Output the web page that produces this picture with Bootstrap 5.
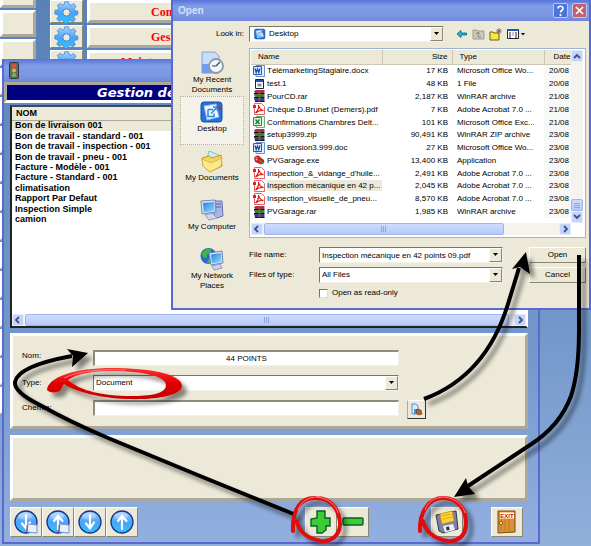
<!DOCTYPE html>
<html lang="fr">
<head>
<meta charset="utf-8">
<meta name="viewport" content="width=device-width, initial-scale=1">
<title>Gestion de</title>
<link rel="stylesheet" href="https://cdn.jsdelivr.net/npm/bootstrap@5.3.0/dist/css/bootstrap.min.css">
<style>
:root{--face:#ece9d8;--edge:#aca899;--frame:#5b68d0;--ui:"Liberation Sans",sans-serif}
body{font:8px/12px var(--ui);color:#000;background:#6d93c8;overflow:hidden}
button,input,select{font:inherit;color:inherit;margin:0;padding:0;border-radius:0}
svg{display:block;flex:none}
.desk{min-height:100vh;background:linear-gradient(#5981b8,#7298ca 60%,#92afdb)}
.bevel{background:var(--face);border:3px solid;border-color:#fff var(--edge) var(--edge) #fff}
.raised{background:var(--face);border:1px solid;border-color:#fff #8a8674 #8a8674 #fff}
/* menu behind the windows */
.side-menu{width:36px;gap:2px}
.side-menu .bevel{height:27px}
.side-menu .bevel:first-child{height:8px;border-top:0}
.menu-list{padding-left:14px}
.menu-line{height:25px;gap:4px;padding-bottom:2px}
.menu-line .gear{width:33px}
.menu-line .entry{color:#f00;font:bold 12px/16px "Liberation Serif",serif;text-align:left;padding-left:61px;white-space:nowrap}
.menu-line .entry.wide{padding-left:31px}
/* windows */
.win{position:absolute;border:2px solid var(--frame);background:var(--face)}
.gestion{left:2px;top:59px;right:51px;border-top:0;background:linear-gradient(#6088bd,#7397cb 60%,#92afdf)}
.open-dlg{left:171px;top:0;right:0;height:310px;border-top:0;z-index:2}
.bar{background:linear-gradient(#5874d8,#7f9de8 30%,#7b98e2 70%,#6f86d8)}
.gestion .bar{height:23px;padding-left:5px;border-radius:5px 0 0 0}
.open-dlg .bar{height:21px;padding:0 2px 0 5px;color:#d6e0fb;font:bold 10px/21px "Liberation Sans",sans-serif}
.sq{width:15px;height:15px;border:1px solid #b9c8f5;border-radius:2px;background:#4a74e0}
.sq.close-x{background:#c3606f}
.banner{margin:0;border:3px solid;border-color:var(--edge) #fff #fff var(--edge);background:#000080;color:#fff;font:italic bold 13px/15px "DejaVu Sans",sans-serif;padding-left:90px;white-space:nowrap}
.content{padding:2px 10px 5px 6px}
.names{height:223px;background:#fff;border:2px solid;border-color:#3b4a5c #fff #222 #222}
.names table{width:100%;height:118px;font:bold 9px/9px "Liberation Sans",sans-serif}
.names th{height:13px;background:var(--face);border-bottom:1px solid var(--edge);padding:0 0 0 4px}
.names td{padding:0 0 0 3px}
.names tr.on td{background:var(--face)}
.hbar{height:12px;gap:1px;background:#f4f3ee}
.knob{width:12px;border:1px solid #e4ebff;border-radius:2px;background:#c6d4fb;color:#3b5289}
.thumb{border:1px solid #9fb5f0;border-radius:2px;background:linear-gradient(#cfdcff,#b6c9f8)}
.form-panel{margin-top:5px;padding:14px 9px 7px 9px}
.form-grid{display:grid;grid-template-columns:71px minmax(0,1fr) 28px;row-gap:9px;padding-right:89px}
.form-grid > *{height:16px}
.sunk{background:#fff;border:1px solid;border-color:#8f8c7d #f4f2e8 #f4f2e8 #8f8c7d;border-width:2px 1px 1px 2px;min-width:0;width:100%}
.pick{width:19px;height:19px;border-color:#fff #333 #333 #aaa;margin-left:8px}
.combo{display:grid;grid-template-columns:minmax(0,1fr) 13px;background:#fff;border:1px solid;border-color:#77746a #f4f2e8 #f4f2e8 #77746a;min-width:0}
.combo select,.combo input{grid-area:1/1/2/3;border:0;background:transparent;appearance:none;padding-left:2px;width:100%;height:100%;outline:0}
.combo .drop{grid-area:1/2;pointer-events:none}
.info-panel{margin-top:6px;height:66px}
.tools{margin-top:6px;height:30px;padding-right:5px}
.tools .raised{width:32px;height:30px}
.tools .edit{margin-left:auto;margin-right:62px}
.tools .finish{gap:28px}
/* open dialog */
.dlg-grid{display:grid;grid-template-columns:64px minmax(0,1fr);column-gap:5px;padding:5px 3px 0 7px}
.look{display:grid;grid-template-columns:minmax(0,195px) auto;column-gap:12px;height:16px}
.look .combo{grid-template-columns:18px minmax(0,1fr) 13px}
.look .combo select{grid-area:1/1/2/4;padding-left:19px}
.look .combo .drop{grid-area:1/3}
.look .combo svg.lead-ico{grid-area:1/1}
.caption{line-height:16px}
.flat{border:0;background:none}
.place{height:49px;padding-top:3px;border:1px solid transparent;background:none;line-height:10px}
.place.on{background:#f4f2e8;border:1px dotted #b5b19e}
.places{padding-top:5px}
.view{margin-top:6px;height:190px;background:#fff;border:1px solid #9db3d8;padding:1px 2px 1px 1px;display:grid;grid-template-columns:minmax(0,1fr) 12px;grid-template-rows:minmax(0,1fr) 13px}
.files{overflow:hidden}
.files table{table-layout:fixed;width:100%;height:168px;white-space:nowrap}
.files th{height:14px;background:var(--face);font-weight:400;border-right:1px solid #cbc7b4;padding:0 7px;line-height:13px;border-bottom:1px solid #cbc7b4}
.files td{padding:0;line-height:11px}
.files td:nth-child(2),.files th:nth-child(2){text-align:right;padding-right:4px}
.files td:nth-child(3){padding-left:5px}
.files td:last-child{background:#f8f8f6;padding-left:5px}
.files th:last-child{border-right:0;padding:0 0 0 9px}
.files .on span{background:var(--face)}
.fn{padding-left:2px;gap:2px}
.vbar{background:#f4f3ee}
.vbar .knob{height:12px}
.fields{display:grid;grid-template-columns:70px minmax(0,184px) minmax(0,1fr);row-gap:4px;margin-top:9px}
.fields > *{height:16px}
.fields .act{width:57px;justify-self:end}
.fields .tick{height:12px}
.tick input{appearance:none;width:9px;height:9px;background:#fff;border:1px solid;border-color:#77746a #ddd #ddd #77746a}
.notes{position:absolute;left:0;top:0;z-index:3;pointer-events:none}
</style>
<script src="https://cdn.jsdelivr.net/npm/bootstrap@5.3.0/dist/js/bootstrap.bundle.min.js"></script>
</head>
<body>
<svg width="0" height="0" class="position-absolute" aria-hidden="true">
<defs>
<linearGradient id="blue" x1="0" y1="0" x2="0" y2="1"><stop offset="0" stop-color="#a9d4ff"/><stop offset=".5" stop-color="#4ba3f5"/><stop offset="1" stop-color="#2fc4ff"/></linearGradient>
<linearGradient id="scr" x1="0" y1="0" x2="1" y2="1"><stop offset="0" stop-color="#2a7de0"/><stop offset="1" stop-color="#8be4fb"/></linearGradient>
<linearGradient id="red" x1="0" y1="0" x2="0" y2="1"><stop offset="0" stop-color="#f33"/><stop offset=".5" stop-color="#e00000"/><stop offset="1" stop-color="#c40000"/></linearGradient>
<symbol id="gear" viewBox="0 0 24 24"><path d="M10 1l4-.5.7 3.2 2.2 1 2.8-2 2.7 3-1.8 2.6.8 2.2 3.1.8-.3 3.8-3.2.4-1 2 1.700 2.700-2.900 2.600-2.600-1.700-2.100.8-.8 3.100-4-.2-.5-3.200-2.100-.9-2.700 1.700-2.700-2.900 1.800-2.500-.8-2.200-3.100-.7.300-4 3.200-.4.9-2-1.700-2.700L5.100 2.600 7.700 4.300l1.800-.6z" fill="url(#blue)" stroke="#3a7fd0" stroke-width=".8"/><circle cx="12" cy="12.500" r="4" fill="#ece9d8" stroke="#3a7fd0"/></symbol>
<symbol id="caret" viewBox="0 0 7 4"><path d="M1 0h5L3.500 3z"/></symbol>
<symbol id="word" viewBox="0 0 12 12"><path d="M3 .5h8.500v11H3z" fill="#e6efff" stroke="#6d8fc9"/><path d="M.5 1.500h8v8h-8z" fill="#dbe7fb" stroke="#2b5cb0"/><path d="M2 3.500l1.200 4L4.500 4l1.300 3.500L7 3.500" fill="none" stroke="#1c48a8" stroke-width="1.200"/></symbol>
<symbol id="xls" viewBox="0 0 12 12"><path d="M3 .5h8.500v11H3z" fill="#eaf6ea" stroke="#6fae7a"/><path d="M.5 1.500h8v8h-8z" fill="#e0f2e0" stroke="#2f8a3a"/><path d="M2.500 3.500l4 4.500M6.500 3.500l-4 4.500" stroke="#1d7d2c" stroke-width="1.400"/></symbol>
<symbol id="app" viewBox="0 0 12 12"><path d="M2.500 1.500h8v9h-8z" fill="#fff" stroke="#222"/><path d="M3 2h7v2H3z" fill="#274db0"/><path d="M4.500 5.500h4v3h-4z" fill="#7d91a8"/></symbol>
<symbol id="rar" viewBox="0 0 12 12"><path d="M1 1l2-1h8.500v3H2z" fill="#b5265c"/><path d="M1 4h10.500v3H2z" fill="#2a8a35"/><path d="M1 8h10.500v3.500H2z" fill="#3a3aa0"/><path d="M1 3.500h10.500M1 7.500h10.500M2 11.500h9.500" stroke="#111"/><path d="M5.500 0h2v11.500h-2z" fill="#8a5a20"/></symbol>
<symbol id="pdf" viewBox="0 0 12 12"><path d="M1.500 .5h7l3 3v8h-10z" fill="#fff" stroke="#d66"/><path d="M2.500 10c2-2 3.500-5.500 3-8 .5 3 2.500 5 5 5.500-3-.5-5.500.5-8 2.500z" fill="none" stroke="#e01818" stroke-width="1.300"/><path d="M0 2h3v3H0z" fill="#d22"/></symbol>
<symbol id="exe" viewBox="0 0 12 12"><path d="M1 4c2-3 5-3 6-1l4 3c1 3-1 5-4 4L2 8z" fill="#c81e28"/><path d="M2 3l3 1M6 6l4 3" stroke="#2d2" stroke-width="1"/><circle cx="3.500" cy="5.500" r="1" fill="#fbb"/></symbol>
<symbol id="desktop" viewBox="0 0 24 24"><rect x="1" y="2" width="21" height="20" rx="3" fill="#2671d9" stroke="#1550a8"/><path d="M4 6l12-2 3 13-12 3z" fill="#eef6ff" stroke="#8ab4ea"/><path d="M8 9.500h5M8 9.500v7h6v-3M11 13.500l6-6M13 7h4.500v4" fill="none" stroke="#2a86d8" stroke-width="1.500"/><path d="M18 6l4 2-3 2z" fill="#a03a20"/></symbol>
<symbol id="recent" viewBox="0 0 24 24"><path d="M2 1h13l4 4v17H2z" fill="#c9ddfb" stroke="#7fa4e0"/><path d="M2 13h10v9H2z" fill="#6f9ced"/><circle cx="16" cy="15" r="7" fill="#f2f7fc" stroke="#8e9aa8" stroke-width="1.800"/><path d="M16 15l4-4M16 15h-4" stroke="#345" stroke-width="1.200"/></symbol>
<symbol id="docs" viewBox="0 0 24 24"><path d="M9 2l10 4-4 12-9-4z" fill="#cfe6fc" stroke="#7cb"/><path d="M2 9l7-2 3 2 9-3 1 11-12 6-7-6z" fill="#f5d65c" stroke="#c59a20"/><path d="M2 10l9 4 11-5-1 8-11 6-7-6z" fill="#fce98e" stroke="#d3aa30" stroke-width=".7"/></symbol>
<symbol id="computer" viewBox="0 0 24 24"><path d="M14 3h8l1 15-6 2-3-2z" fill="#a9b5df" stroke="#6877b3"/><path d="M16 6h5M16 9h5" stroke="#5363a5"/><path d="M1 3l14-1 1 12-14 2z" fill="#dbe3f5" stroke="#7484b8"/><path d="M3 5l11-1 .7 9-11 1.300z" fill="url(#scr)"/><path d="M5 17l7-2 5 5-8 2z" fill="#cdd5ee" stroke="#8c98c7"/></symbol>
<symbol id="network" viewBox="0 0 24 24"><circle cx="8.500" cy="9" r="8" fill="#2469cf"/><path d="M2 6c3-5 8-5 9-3 0 4-4 3-4 6s-3 3-5-1zM8 12l4 1-2 4-3-1z" fill="#3fb545"/><path d="M9 6l13-2 1 12-12 2z" fill="#dbe3f5" stroke="#7484b8"/><path d="M11 7.500l10-1.500.7 9-9.700 1.200z" fill="url(#scr)"/><path d="M12 19l8-2 2 4-8 2z" fill="#cdd5ee" stroke="#8c98c7"/></symbol>
<symbol id="ball" viewBox="0 0 24 24"><ellipse cx="12" cy="12" rx="11" ry="11" fill="url(#blue)" stroke="#17358f" stroke-width="1.300"/><ellipse cx="11" cy="6" rx="7" ry="3.500" fill="#fff" opacity=".3"/></symbol>
<symbol id="down" viewBox="0 0 24 24"><path d="M12 5v13M8 13.500l4 5 4-6" fill="none" stroke="#fff" stroke-width="2.200" stroke-linecap="round"/></symbol>
<symbol id="up" viewBox="0 0 24 24"><path d="M12 19V7M8 11l4-5 4.500 5" fill="none" stroke="#fff" stroke-width="2.200" stroke-linecap="round"/></symbol>
<symbol id="page" viewBox="0 0 24 24"><path d="M14 14l9 1v8l-10-1z" fill="#e4f2ff" stroke="#7593c4"/><path d="M13 15v7" stroke="#b33"/></symbol>
</defs>
</svg>

<main class="desk position-relative overflow-hidden">
  <div class="d-flex">
    <div class="side-menu d-flex flex-column flex-shrink-0">
      <div class="bevel"></div><div class="bevel"></div><div class="bevel"></div><div class="bevel"></div><div class="bevel"></div><div class="bevel"></div><div class="bevel"></div><div class="bevel"></div><div class="bevel"></div><div class="bevel"></div><div class="bevel"></div><div class="bevel"></div><div class="bevel"></div><div class="bevel"></div><div class="bevel"></div>
    </div>
    <div class="menu-list flex-grow-1">
      <div class="menu-line d-flex"><button class="raised gear d-flex justify-content-center align-items-center" aria-label="Options"><svg width="25" height="22"><use href="#gear"/></svg></button><button class="bevel entry flex-grow-1">Con</button></div>
      <div class="menu-line d-flex"><button class="raised gear d-flex justify-content-center align-items-center" aria-label="Options"><svg width="25" height="22"><use href="#gear"/></svg></button><button class="bevel entry flex-grow-1">Ges</button></div>
      <div class="menu-line d-flex"><button class="raised gear d-flex justify-content-center align-items-center" aria-label="Options"><svg width="25" height="22"><use href="#gear"/></svg></button><button class="bevel entry wide flex-grow-1">Mainte</button></div>
    </div>
  </div>

  <section class="win gestion" aria-label="Gestion">
    <div class="bar d-flex align-items-center">
      <svg width="10" height="17" viewBox="0 0 10 17"><rect x=".5" y=".5" width="9" height="16" rx="1" fill="#666a60" stroke="#333"/><circle cx="5" cy="4" r="2" fill="#f04a30"/><circle cx="5" cy="8.500" r="2" fill="#f0b040"/><circle cx="5" cy="13" r="2" fill="#50c860"/></svg>
    </div>
    <h1 class="banner">Gestion de</h1>
    <div class="content">
      <div class="names d-flex flex-column justify-content-between">
        <table>
          <thead><tr><th scope="col">NOM</th></tr></thead>
          <tbody>
            <tr class="on"><td>Bon de livraison 001</td></tr>
            <tr><td>Bon de travail - standard - 001</td></tr>
            <tr><td>Bon de travail - inspection - 001</td></tr>
            <tr><td>Bon de travail - pneu - 001</td></tr>
            <tr><td>Facture - Modèle - 001</td></tr>
            <tr><td>Facture - Standard - 001</td></tr>
            <tr><td>climatisation</td></tr>
            <tr><td>Rapport Par Defaut</td></tr>
            <tr><td>Inspection Simple</td></tr>
            <tr><td>camion</td></tr>
          </tbody>
        </table>
        <div class="hbar d-flex">
          <button class="knob" aria-label="Gauche"><svg width="10" height="8" viewBox="0 0 10 8"><path d="M6 1L3 4l3 3" fill="none" stroke="#3b5289" stroke-width="1.800"/></svg></button>
          <div class="thumb flex-grow-1 d-flex justify-content-center align-items-center"><svg width="8" height="6"><path d="M1.500 0v6M3.500 0v6M5.500 0v6" stroke="#8ea5e2"/></svg></div>
          <button class="knob ms-1" aria-label="Droite"><svg width="10" height="8" viewBox="0 0 10 8"><path d="M4 1l3 3-3 3" fill="none" stroke="#3b5289" stroke-width="1.800"/></svg></button>
        </div>
      </div>

      <div class="bevel form-panel">
        <div class="form-grid">
          <label for="nom">Nom:</label><input id="nom" class="sunk text-center" value="44 POINTS"><span></span>
          <label for="type" class="caption">Type:</label>
          <div class="combo"><select id="type"><option>Document</option></select><span class="drop raised d-flex justify-content-center align-items-center"><svg width="7" height="4"><use href="#caret"/></svg></span></div><span></span>
          <label for="chemin" class="caption">Chemin:</label><input id="chemin" class="sunk"><button class="raised pick d-flex justify-content-center align-items-center" aria-label="Parcourir"><svg width="13" height="13" viewBox="0 0 13 13"><path d="M2 1h4l2 2v8H2z" fill="#d8ecff" stroke="#5c8fc0"/><path d="M4 6h3v5H4z" fill="#3b9be0"/><path d="M7 6l4 1 1 4-3 1-3-2z" fill="#b5612a" stroke="#5c3015" stroke-width=".6"/></svg></button>
        </div>
      </div>
      <div class="bevel info-panel"></div>

      <div class="tools d-flex">
        <div class="d-flex">
          <button class="raised d-flex justify-content-center align-items-center" aria-label="Dernier"><svg width="24" height="24"><use href="#ball"/><use href="#down"/><use href="#page"/></svg></button>
          <button class="raised d-flex justify-content-center align-items-center" aria-label="Premier"><svg width="24" height="24"><use href="#ball"/><use href="#up"/><use href="#page"/></svg></button>
          <button class="raised d-flex justify-content-center align-items-center" aria-label="Suivant"><svg width="24" height="24"><use href="#ball"/><use href="#down"/></svg></button>
          <button class="raised d-flex justify-content-center align-items-center" aria-label="Précédent"><svg width="24" height="24"><use href="#ball"/><use href="#up"/></svg></button>
        </div>
        <div class="edit d-flex">
          <button class="raised d-flex justify-content-center align-items-center" aria-label="Ajouter"><svg width="22" height="24" viewBox="0 0 22 24"><path d="M7 1h8v7h5v8h-4v4l-4 3H7v-7H1V9l6-1z" fill="#3ccc36" stroke="#0b5d2c" stroke-width="1.400"/></svg></button>
          <button class="raised d-flex justify-content-center align-items-center" aria-label="Supprimer"><svg width="22" height="10" viewBox="0 0 22 10"><rect x="1" y="1" width="20" height="7" rx="1" fill="#3ccc36" stroke="#0b5d2c" stroke-width="1.400"/></svg></button>
        </div>
        <div class="finish d-flex">
          <button class="raised d-flex justify-content-center align-items-center" aria-label="Enregistrer"><svg width="24" height="24" viewBox="0 0 24 24"><path d="M1 5l5-1 2 8 10-3-2-7 5-1 2 18-15 4-4-2z" fill="#7d81a4" stroke="#34364d"/><path d="M5 4l12-3 2 10-12 3z" fill="#ffd43a" stroke="#d39a10"/><path d="M7 6l9-2M8 9l9-2" stroke="#e0a820"/><path d="M8 16l10-2 2 6-10 2.500z" fill="#eef"/><path d="M11 17l3-.5.700 3.500-3 .5z" fill="#334"/></svg></button>
          <button class="raised d-flex justify-content-center align-items-center" aria-label="Quitter"><svg width="20" height="24" viewBox="0 0 20 24"><path d="M1 1h17v21l-17 1z" fill="#d99332" stroke="#7a4810"/><path d="M4 9v12M8 9v12M12 9v12" stroke="#c07a20"/><path d="M3 2.500h14v6H3z" fill="#fff"/><text x="10" y="8" font-family="Liberation Sans" font-weight="bold" font-size="6" text-anchor="middle" fill="#e00">EXIT</text><circle cx="4" cy="13" r="1.700" fill="#ffd860" stroke="#6a3c08" stroke-width=".7"/></svg></button>
        </div>
      </div>
    </div>
  </section>

  <section class="win open-dlg" aria-label="Open">
    <div class="bar d-flex align-items-center">
      <span class="flex-grow-1">Open</span>
      <button class="sq me-1 d-flex justify-content-center align-items-center" aria-label="Help"><svg width="9" height="11" viewBox="0 0 9 11"><path d="M2 3.500C2 .5 7 .5 7 3.500 7 5.500 4.500 5.500 4.500 7.500M4.500 9v2" fill="none" stroke="#fff" stroke-width="1.700"/></svg></button>
      <button class="sq close-x d-flex justify-content-center align-items-center" aria-label="Close"><svg width="9" height="9" viewBox="0 0 9 9"><path d="M1 1l7 7M8 1L1 8" stroke="#fff" stroke-width="1.700"/></svg></button>
    </div>
    <div class="dlg-grid">
      <label for="look" class="text-end caption">Look in:</label>
      <div class="look">
        <div class="combo"><svg class="lead-ico align-self-center ms-1" width="12" height="12"><use href="#desktop"/></svg><select id="look"><option>Desktop</option></select><span class="drop raised d-flex justify-content-center align-items-center"><svg width="7" height="4"><use href="#caret"/></svg></span></div>
        <div class="d-flex align-items-center gap-1">
          <button class="flat" aria-label="Back"><svg width="12" height="12" viewBox="0 0 12 12"><path d="M1 6l4-3.500V5h5.500v2H5v2.500z" fill="#1bc4dc" stroke="#0a5a78" stroke-width=".8"/></svg></button>
          <button class="flat" aria-label="Up"><svg width="13" height="12" viewBox="0 0 13 12"><path d="M1 2h4l1 1h6v8H1z" fill="#cbc8bb" stroke="#a09d90"/><path d="M4 6l2-2 2 2M6 4v5h3" fill="none" stroke="#8d8a7e"/></svg></button>
          <button class="flat" aria-label="New folder"><svg width="13" height="13" viewBox="0 0 13 13"><path d="M1 4h3l1 1h5v7H1z" fill="#ffe640" stroke="#6b6210"/><path d="M10 0v6M7 3h6M8 1l4 4M12 1L8 5" stroke="#555" stroke-width=".7"/></svg></button>
          <button class="flat d-flex align-items-center" aria-label="Views"><svg width="20" height="12" viewBox="0 0 20 12"><path d="M1.500 1.500h11v9h-11z" fill="#fff" stroke="#223"/><path d="M1 1h12v2H1z" fill="#2353b8"/><path d="M3 5h2M6.500 5h1M9 5h2M3 7h2M6.500 7h1M9 7h2M3 9h2M9 9h2" stroke="#223"/><path d="M15 5h4l-2 2.500z"/></svg></button>
        </div>
      </div>

      <nav class="places d-flex flex-column" aria-label="Places">
        <button class="place d-flex flex-column align-items-center"><svg width="24" height="24"><use href="#recent"/></svg><span>My Recent<br>Documents</span></button>
        <button class="place on d-flex flex-column align-items-center"><svg width="24" height="24"><use href="#desktop"/></svg><span>Desktop</span></button>
        <button class="place d-flex flex-column align-items-center"><svg width="24" height="24"><use href="#docs"/></svg><span>My Documents</span></button>
        <button class="place d-flex flex-column align-items-center"><svg width="24" height="24"><use href="#computer"/></svg><span>My Computer</span></button>
        <button class="place d-flex flex-column align-items-center"><svg width="24" height="24"><use href="#network"/></svg><span>My Network<br>Places</span></button>
      </nav>

      <div>
        <div class="view">
          <div class="files">
            <table>
              <colgroup><col><col width="70"><col width="92"><col width="27"></colgroup>
              <thead><tr><th scope="col">Name</th><th scope="col">Size</th><th scope="col">Type</th><th scope="col">Date</th></tr></thead>
              <tbody>
                <tr><td><div class="fn d-flex align-items-center"><svg width="12" height="12"><use href="#word"/></svg><span>TélémarketingStagiaire.docx</span></div></td><td>17 KB</td><td>Microsoft Office Wo...</td><td>20/08</td></tr>
                <tr><td><div class="fn d-flex align-items-center"><svg width="12" height="12"><use href="#app"/></svg><span>test.1</span></div></td><td>48 KB</td><td>1 File</td><td>20/08</td></tr>
                <tr><td><div class="fn d-flex align-items-center"><svg width="12" height="12"><use href="#rar"/></svg><span>PourCD.rar</span></div></td><td>2,187 KB</td><td>WinRAR archive</td><td>21/08</td></tr>
                <tr><td><div class="fn d-flex align-items-center"><svg width="12" height="12"><use href="#pdf"/></svg><span>Chèque D.Brunet (Demers).pdf</span></div></td><td>7 KB</td><td>Adobe Acrobat 7.0 ...</td><td>21/08</td></tr>
                <tr><td><div class="fn d-flex align-items-center"><svg width="12" height="12"><use href="#xls"/></svg><span>Confirmations Chambres Delt...</span></div></td><td>101 KB</td><td>Microsoft Office Exc...</td><td>21/08</td></tr>
                <tr><td><div class="fn d-flex align-items-center"><svg width="12" height="12"><use href="#rar"/></svg><span>setup3999.zip</span></div></td><td>90,491 KB</td><td>WinRAR ZIP archive</td><td>23/08</td></tr>
                <tr><td><div class="fn d-flex align-items-center"><svg width="12" height="12"><use href="#word"/></svg><span>BUG version3.999.doc</span></div></td><td>27 KB</td><td>Microsoft Office Wo...</td><td>23/08</td></tr>
                <tr><td><div class="fn d-flex align-items-center"><svg width="12" height="12"><use href="#exe"/></svg><span>PVGarage.exe</span></div></td><td>13,400 KB</td><td>Application</td><td>23/08</td></tr>
                <tr><td><div class="fn d-flex align-items-center"><svg width="12" height="12"><use href="#pdf"/></svg><span>Inspection_&amp;_vidange_d'huile...</span></div></td><td>2,491 KB</td><td>Adobe Acrobat 7.0 ...</td><td>23/08</td></tr>
                <tr class="on"><td><div class="fn d-flex align-items-center"><svg width="12" height="12"><use href="#pdf"/></svg><span class="flex-grow-1">Inspection mécanique en 42 p...</span></div></td><td>2,045 KB</td><td>Adobe Acrobat 7.0 ...</td><td>23/08</td></tr>
                <tr><td><div class="fn d-flex align-items-center"><svg width="12" height="12"><use href="#pdf"/></svg><span>Inspection_visuelle_de_pneu...</span></div></td><td>8,570 KB</td><td>Adobe Acrobat 7.0 ...</td><td>23/08</td></tr>
                <tr><td><div class="fn d-flex align-items-center"><svg width="12" height="12"><use href="#rar"/></svg><span>PVGarage.rar</span></div></td><td>1,985 KB</td><td>WinRAR archive</td><td>23/08</td></tr>
              </tbody>
            </table>
          </div>
          <div class="vbar d-flex flex-column">
            <button class="knob" aria-label="Scroll up"><svg width="10" height="8" viewBox="0 0 10 8"><path d="M2 6l3-3 3 3" fill="none" stroke="#3b5289" stroke-width="1.800"/></svg></button>
            <div class="flex-grow-1"></div>
            <div class="thumb knob d-flex justify-content-center align-items-center"><svg width="6" height="7"><path d="M0 1.500h6M0 3.500h6M0 5.500h6" stroke="#8ea5e2"/></svg></div>
            <button class="knob" aria-label="Scroll down"><svg width="10" height="8" viewBox="0 0 10 8"><path d="M2 2l3 3 3-3" fill="none" stroke="#3b5289" stroke-width="1.800"/></svg></button>
          </div>
          <div class="hbar d-flex">
            <button class="knob" aria-label="Scroll left"><svg width="10" height="8" viewBox="0 0 10 8"><path d="M6 1L3 4l3 3" fill="none" stroke="#3b5289" stroke-width="1.800"/></svg></button>
            <div class="thumb w-75 d-flex justify-content-center align-items-center"><svg width="8" height="6"><path d="M1.500 0v6M3.500 0v6M5.500 0v6" stroke="#8ea5e2"/></svg></div>
            <button class="knob ms-auto" aria-label="Scroll right"><svg width="10" height="8" viewBox="0 0 10 8"><path d="M4 1l3 3-3 3" fill="none" stroke="#3b5289" stroke-width="1.800"/></svg></button>
          </div>
        </div>
        <div class="fields">
          <label for="fname" class="caption">File name:</label>
          <div class="combo"><input id="fname" value="Inspection mécanique en 42 points 09.pdf"><span class="drop raised d-flex justify-content-center align-items-center"><svg width="7" height="4"><use href="#caret"/></svg></span></div>
          <button class="raised act">Open</button>
          <label for="ftype" class="caption">Files of type:</label>
          <div class="combo"><select id="ftype"><option>All Files</option></select><span class="drop raised d-flex justify-content-center align-items-center"><svg width="7" height="4"><use href="#caret"/></svg></span></div>
          <button class="raised act">Cancel</button>
          <span></span><label class="tick d-flex align-items-center gap-1"><input type="checkbox"><span>Open as read-only</span></label>
        </div>
      </div>
    </div>
  </section>

  <svg class="notes" width="591" height="546" viewBox="0 0 591 546" aria-hidden="true">
    <defs><filter id="cast" x="-20%" y="-20%" width="150%" height="150%"><feDropShadow dx="5" dy="5" stdDeviation="2" flood-color="#000" flood-opacity=".45"/></filter></defs>
    <g filter="url(#cast)" fill="none" stroke="#000" stroke-width="4">
      <path d="M296 515L200 476L108 438Q70 422 38 404Q14 392 15 382Q18 366 72 356"/>
      <path d="M424 399Q486 376 508 304L519 268"/>
      <path d="M579 255V330Q579 372 571 396Q560 426 530 445L468 486"/>
      <g fill="#000" stroke="none"><path d="M88 353L67 349L73 356L72 367z"/><path d="M526 252L512 269L520 267L530 274z"/><path d="M454 497L466 478L468 486L475 494z"/></g>
    </g>
    <g filter="url(#cast)">
      <path fill="url(#red)" fill-rule="evenodd" d="M47 390C48 377 75 368 112 368C150 368 182 374 182 386C181 396 155 400 127 399C100 398 76 392 64 384L60 391C56 393 49 393 47 390zM68 380C80 391 104 396 130 396C150 396 166 394 166 385C166 376 140 371 112 371C92 371 76 374 68 380z"/>
      <g fill="none" stroke="#e00a10" stroke-width="4" stroke-linecap="round"><path d="M293 531C292 508 302 497 316 498C332 498 340 511 340 525C339 537 330 542 321 541C308 539 298 531 297 521"/><path d="M420 531C419 511 430 498 443 498C459 498 467 511 466 525C465 537 457 542 448 541C434 539 425 531 423 521"/></g>
    </g>
    <g fill="none" stroke="#ff9a9a" stroke-width="1" opacity=".8"><path d="M64 378C78 371 100 369 125 370"/><path d="M298 510C301 501 309 497 317 497C328 498 336 505 338 513"/><path d="M425 510C428 501 436 497 444 497C455 498 463 505 465 513"/></g>
  </svg>
</main>
</body>
</html>
